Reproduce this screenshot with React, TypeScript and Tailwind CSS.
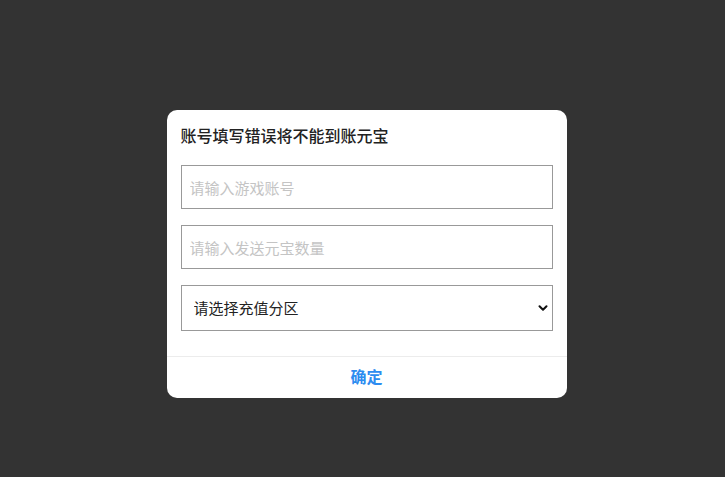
import { ChevronDown } from "lucide-react";

const font = { fontFamily: '"Noto Sans CJK SC", "Microsoft YaHei", sans-serif' };

export default function App() {
  return (
    <div
      className="flex h-[477px] w-full items-start justify-center bg-[#333333] pt-[110px] pl-[8px]"
      style={font}
    >
      <div className="w-[400px] overflow-hidden rounded-[10px] bg-white">
        <div className="px-[14px] pt-[13px] pb-[25px]">
          <h2 className="text-[16px] leading-[24px] font-medium text-[#222]">
            账号填写错误将不能到账元宝
          </h2>

          <div className="mt-[18px] flex flex-col gap-[16px]">
            <input
              type="text"
              placeholder="请输入游戏账号"
              className="h-[44px] w-full border border-[#999] px-[8px] text-[15px] text-[#333] outline-none placeholder:text-[#c4c4c4]"
            />
            <input
              type="text"
              placeholder="请输入发送元宝数量"
              className="h-[44px] w-full border border-[#999] px-[8px] text-[15px] text-[#333] outline-none placeholder:text-[#c4c4c4]"
            />
            <div className="relative">
              <select className="h-[46px] w-full appearance-none border border-[#999] bg-white px-[12px] text-[15px] text-[#222] outline-none">
                <option>请选择充值分区</option>
              </select>
              {/* dropdown arrow */}
              <ChevronDown
                size={14}
                strokeWidth={3.5}
                className="pointer-events-none absolute top-[16px] right-[3px] text-[#111]"
              />
            </div>
          </div>
        </div>

        <div className="border-t border-[#ececec]">
          <button className="flex h-[41px] w-full items-center justify-center pb-[3px] text-[16px] font-bold text-[#2d8cf0]">
            确定
          </button>
        </div>
      </div>
    </div>
  );
}
